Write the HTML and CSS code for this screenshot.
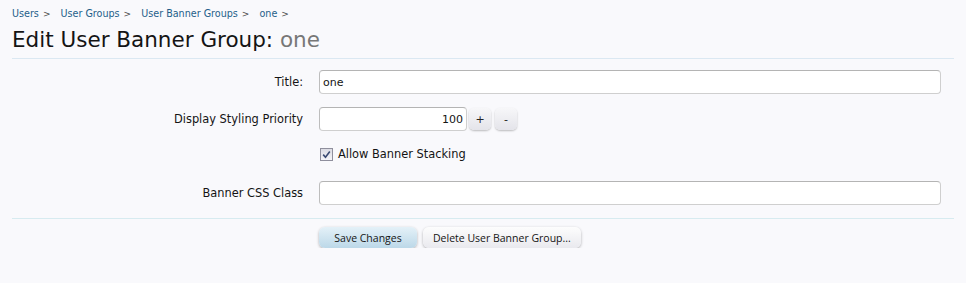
FILE: index.html
```html
<!DOCTYPE html>
<html lang="en">
<head>
    <meta charset="UTF-8">
    <title>Edit User Banner Group</title>
    <link rel="stylesheet" href="styles.css">
</head>
<body>

    <div class="page">
        <div class="breadcrumb">
            <a href="#">Users</a><span class="arrow">&gt;</span>
            <a href="#">User Groups</a><span class="arrow">&gt;</span>
            <a href="#">User Banner Groups</a><span class="arrow">&gt;</span>
            <a href="#">one</a><span class="arrow">&gt;</span>
        </div>

        <h1 class="title">Edit User Banner Group: <em>one</em></h1>

        <form class="form">
            <div class="row">
                <label class="label" for="title">Title:</label>
                <div class="field"><input type="text" id="title" class="text wide" value="one"></div>
            </div>

            <div class="row">
                <label class="label" for="priority">Display Styling Priority</label>
                <div class="field spin">
                    <input type="text" id="priority" class="text num" value="100">
                    <button type="button" class="spin-btn">+</button>
                    <button type="button" class="spin-btn">-</button>
                </div>
            </div>

            <div class="row check-row">
                <div class="label"></div>
                <div class="field">
                    <label class="check"><span class="box"><svg width="9" height="9" viewBox="0 0 9 9"><path d="M1.2 4.6 L3.5 7.2 L7.8 1.4" fill="none" stroke="#3a4a72" stroke-width="1.6"/></svg></span>Allow Banner Stacking</label>
                </div>
            </div>

            <div class="row">
                <label class="label" for="css">Banner CSS Class</label>
                <div class="field"><input type="text" id="css" class="text wide" value=""></div>
            </div>

            <div class="submit">
                <button type="submit" class="button primary">Save Changes</button>
                <button type="button" class="button">Delete User Banner Group...</button>
            </div>
        </form>
    </div>

</body>
</html>
```

FILE: styles.css
```css
/* Grundlayout */
body {
    margin: 0;
    background-color: #f9f9fc;
    font-family: "DejaVu Sans", Tahoma, sans-serif;
    font-size: 11px;
    color: #141414;
}

.page {
    padding: 6px 12px 0 12px;
}

.breadcrumb {
    height: 15px;
    line-height: 15px;
    font-size: 9.6px;
}

.breadcrumb a {
    color: #1f5f8a;
    text-decoration: none;
}

.breadcrumb .arrow {
    color: #4a4a4a;
    font-size: 9px;
    margin: 0 7px 0 4px;
}

.title {
    margin: 5px 0 0 0;
    font-size: 21.5px;
    font-weight: normal;
    line-height: 27px;
    color: #141414;
}

.title em {
    font-style: normal;
    color: #777;
}

.form {
    margin-top: 5px;
    border-top: 1px solid #dbe8f2;
    padding-top: 11px;
}

.row {
    display: flex;
    align-items: center;
    margin-bottom: 13px;
}

.row.check-row {
    margin-bottom: 17px;
}

.label {
    width: 307px;
    text-align: right;
    padding-right: 16px;
    box-sizing: border-box;
    font-size: 11.4px;
}

.field {
    flex: 1;
    padding-right: 13px;
}

.text {
    box-sizing: border-box;
    height: 24px;
    border: 1px solid #cfcfcf;
    border-top-color: #b4b4b4;
    border-left-color: #bdbdbd;
    border-radius: 4px;
    background-color: #fff;
    font-family: inherit;
    font-size: 11px;
    padding: 0 3px;
    color: #141414;
}

.wide {
    width: 100%;
}

.spin {
    display: flex;
    align-items: center;
}

.num {
    width: 148px;
    text-align: right;
}

.spin-btn {
    width: 22px;
    height: 22px;
    margin-left: 2px;
    border: none;
    border-radius: 5px;
    background: linear-gradient(#f7f7f9, #e4e4ea);
    box-shadow: 0 1px 2px rgba(0, 0, 0, 0.25);
    font-family: inherit;
    font-size: 11px;
    padding: 0;
    color: #222;
}

.spin-btn + .spin-btn {
    margin-left: 4px;
}

.check {
    display: flex;
    align-items: center;
    height: 20px;
    font-size: 11.4px;
}

.box {
    width: 11px;
    height: 11px;
    border: 1px solid #8f8f9d;
    background: linear-gradient(#dcdce4, #f4f4f8);
    margin: 0 5px 0 1px;
    display: flex;
    align-items: center;
    justify-content: center;
}

.submit {
    border-top: 1px solid #d7ebf0;
    padding: 8px 0 0 307px;
    display: flex;
}

.button {
    height: 21px;
    border: none;
    border-radius: 6px;
    background: linear-gradient(#fdfdfd, #e9e9ee);
    box-shadow: 0 1px 3px rgba(0, 0, 0, 0.3);
    font-family: "Open Sans", sans-serif;
    font-size: 10.5px;
    color: #141414;
    padding: 0 10px;
    margin-right: 6px;
}

.button.primary {
    background: linear-gradient(#e4f1f8, #bcd8e8);
    width: 98px;
    padding: 0;
}
```
